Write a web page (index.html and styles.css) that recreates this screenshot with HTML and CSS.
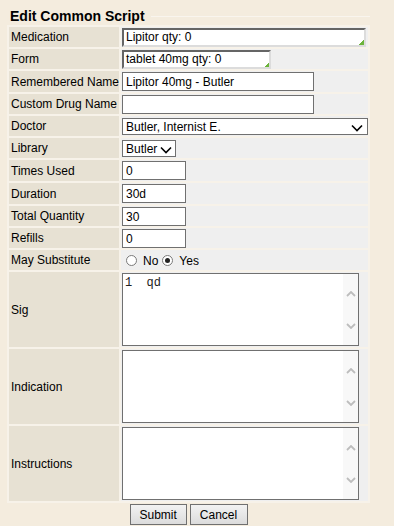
FILE: index.html
```html
<!DOCTYPE html>
<html lang="en">
<head>
  <meta charset="UTF-8" />
  <title>Edit Common Script</title>
  <link rel="stylesheet" href="styles.css">
</head>
<body>

  <div class="title">Edit Common Script</div>

  <form class="script-form">
    <table class="script-table">
      <colgroup>
        <col class="col-label">
        <col class="col-value">
      </colgroup>
      <tr>
        <td class="label">Medication</td>
        <td class="value"><textarea class="grip-box med" rows="1">Lipitor qty: 0</textarea></td>
      </tr>
      <tr>
        <td class="label">Form</td>
        <td class="value"><textarea class="grip-box form-box" rows="1">tablet 40mg qty: 0</textarea></td>
      </tr>
      <tr class="tall">
        <td class="label">Remembered Name</td>
        <td class="value"><input type="text" class="text name" value="Lipitor 40mg - Butler"></td>
      </tr>
      <tr>
        <td class="label">Custom Drug Name</td>
        <td class="value"><input type="text" class="text name" value=""></td>
      </tr>
      <tr>
        <td class="label">Doctor</td>
        <td class="value">
          <div class="select-wrap doctor">
            <select><option>Butler, Internist E.</option></select>
            <svg class="chev" width="12" height="8" viewBox="0 0 12 8"><path d="M1 1.5 L6 6.5 L11 1.5" fill="none" stroke="#000" stroke-width="1.6"/></svg>
          </div>
        </td>
      </tr>
      <tr>
        <td class="label">Library</td>
        <td class="value">
          <div class="select-wrap library">
            <select><option>Butler</option></select>
            <svg class="chev" width="12" height="8" viewBox="0 0 12 8"><path d="M1 1.5 L6 6.5 L11 1.5" fill="none" stroke="#000" stroke-width="1.6"/></svg>
          </div>
        </td>
      </tr>
      <tr class="tall">
        <td class="label">Times Used</td>
        <td class="value"><input type="text" class="text short" value="0"></td>
      </tr>
      <tr class="tall">
        <td class="label">Duration</td>
        <td class="value"><input type="text" class="text short" value="30d"></td>
      </tr>
      <tr>
        <td class="label">Total Quantity</td>
        <td class="value"><input type="text" class="text short" value="30"></td>
      </tr>
      <tr>
        <td class="label">Refills</td>
        <td class="value"><input type="text" class="text short" value="0"></td>
      </tr>
      <tr>
        <td class="label">May Substitute</td>
        <td class="value">
          <div class="radios">
            <span class="radio"></span><span>No</span>
            <span class="radio on"></span><span>Yes</span>
          </div>
        </td>
      </tr>
      <tr>
        <td class="label">Sig</td>
        <td class="value memo-cell">
          <div class="memo">
            <textarea>1  qd</textarea>
            <div class="scroll">
              <svg width="10" height="6" viewBox="0 0 10 6"><path d="M1 5 L5 1 L9 5" fill="none" stroke="#bdbdbd" stroke-width="1.8"/></svg>
              <svg width="10" height="6" viewBox="0 0 10 6"><path d="M1 1 L5 5 L9 1" fill="none" stroke="#bdbdbd" stroke-width="1.8"/></svg>
            </div>
          </div>
        </td>
      </tr>
      <tr>
        <td class="label">Indication</td>
        <td class="value memo-cell">
          <div class="memo">
            <textarea></textarea>
            <div class="scroll">
              <svg width="10" height="6" viewBox="0 0 10 6"><path d="M1 5 L5 1 L9 5" fill="none" stroke="#bdbdbd" stroke-width="1.8"/></svg>
              <svg width="10" height="6" viewBox="0 0 10 6"><path d="M1 1 L5 5 L9 1" fill="none" stroke="#bdbdbd" stroke-width="1.8"/></svg>
            </div>
          </div>
        </td>
      </tr>
      <tr>
        <td class="label">Instructions</td>
        <td class="value memo-cell">
          <div class="memo">
            <textarea></textarea>
            <div class="scroll">
              <svg width="10" height="6" viewBox="0 0 10 6"><path d="M1 5 L5 1 L9 5" fill="none" stroke="#bdbdbd" stroke-width="1.8"/></svg>
              <svg width="10" height="6" viewBox="0 0 10 6"><path d="M1 1 L5 5 L9 1" fill="none" stroke="#bdbdbd" stroke-width="1.8"/></svg>
            </div>
          </div>
        </td>
      </tr>
    </table>

    <div class="actions">
      <button type="submit">Submit</button>
      <button type="button">Cancel</button>
    </div>
  </form>

</body>
</html>
```

FILE: styles.css
```css
* {
  box-sizing: border-box;
}

body {
  margin: 0;
  padding: 7px 0 0 7px;
  background: #f4ecde;
  font-family: "Liberation Sans", Arial, sans-serif;
  font-size: 12px;
  color: #000;
}

.title {
  display: flex;
  align-items: center;
  gap: 6px;
  width: 363px;
  padding-left: 3px;
  font-size: 14px;
  font-weight: bold;
  line-height: 17px;
  height: 18px;
}

.title::after {
  content: "";
  flex: 1;
  height: 1px;
  background: #f9f5ee;
}

.script-table {
  table-layout: fixed;
  border-spacing: 2px;
  background: #f7f2e9;
  width: 363px;
}

.col-label {
  width: 110px;
}

.label {
  background: #e7e1d3;
  padding: 0 2px;
  font-size: 12px;
  white-space: nowrap;
}

.value {
  background: #efefef;
  padding: 1px 0 0 1px;
}

.tall .value {
  padding-bottom: 1px;
}

.memo-cell {
  padding: 1px 0 1px 1px;
}

input.text {
  display: block;
  height: 19px;
  border: 1px solid #707070;
  background: #fff;
  font-family: "Liberation Sans", Arial, sans-serif;
  font-size: 12px;
  padding: 0 3px;
  margin: 0;
}

.name {
  width: 192px;
}

.short {
  width: 64px;
}

.grip-box {
  display: block;
  resize: none;
  height: 19px;
  margin: 0;
  padding: 0 2px;
  overflow: hidden;
  font-family: "Liberation Sans", Arial, sans-serif;
  font-size: 12px;
  line-height: 15px;
  border-style: solid;
  border-width: 2px;
  border-color: #656565 #dcdcdc #dcdcdc #656565;
  background: #fff linear-gradient(135deg, transparent 50%, #6cb43c 50%) no-repeat right 0 bottom 0 / 5px 5px;
}

.med {
  width: 244px;
}

.form-box {
  width: 149px;
}

.select-wrap {
  position: relative;
  display: block;
}

.select-wrap select {
  appearance: none;
  -webkit-appearance: none;
  display: block;
  height: 17px;
  border: 1px solid #707070;
  border-radius: 0;
  background: #fff;
  font-family: "Liberation Sans", Arial, sans-serif;
  font-size: 12px;
  padding: 0 0 0 3px;
  margin: 1px 0 1px;
  color: #000;
}

.doctor select {
  width: 246px;
}

.library select {
  width: 54px;
}

.chev {
  position: absolute;
  top: 6px;
}

.doctor .chev {
  left: 229px;
}

.library .chev {
  left: 38px;
}

.radios {
  display: flex;
  align-items: center;
  height: 19px;
  padding-left: 4px;
  font-size: 12px;
}

.radio {
  width: 11px;
  height: 11px;
  border: 1px solid #7a7a7a;
  border-radius: 50%;
  background: #fff;
  margin-right: 6px;
  position: relative;
}

.radio + span {
  margin-right: 4px;
}

.radio.on::after {
  content: "";
  position: absolute;
  left: 2px;
  top: 2px;
  width: 5px;
  height: 5px;
  border-radius: 50%;
  background: #222;
}

.memo {
  display: flex;
  width: 237px;
  height: 73px;
  border: 1px solid #707070;
  background: #fff;
}

.memo textarea {
  flex: 1;
  border: none;
  resize: none;
  outline: none;
  padding: 2px 2px;
  margin: 0;
  font-family: "Liberation Mono", "Courier New", monospace;
  font-size: 12px;
  line-height: 14px;
  color: #222;
  overflow: hidden;
}

.scroll {
  width: 15px;
  background: #f8f8f8;
  display: flex;
  flex-direction: column;
  align-items: center;
  justify-content: center;
  gap: 26px;
}

.scroll svg {
  display: block;
}

.actions {
  display: flex;
  justify-content: center;
  gap: 3px;
  width: 363px;
  margin-top: 1px;
}

.actions button {
  height: 21px;
  padding: 0 9px;
  border: 1px solid #707070;
  border-radius: 0;
  background: linear-gradient(#f2f2f2, #dcdcdc);
  font-family: "Liberation Sans", Arial, sans-serif;
  font-size: 12px;
  color: #000;
}

.actions button:first-child {
  width: 57px;
}

.actions button:last-child {
  width: 58px;
}
```
